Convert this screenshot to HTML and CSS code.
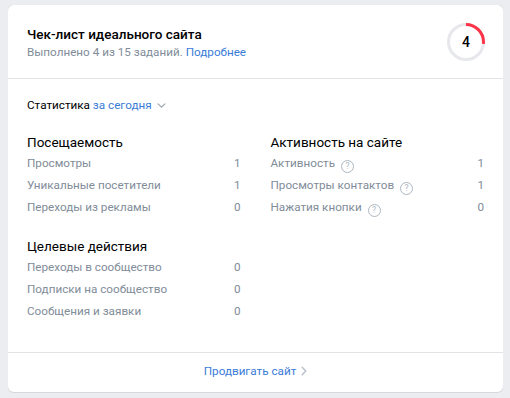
FILE: index.html
```html
<html>
<head>
<meta charset="utf-8">
<link rel="stylesheet" href="styles.css">
</head>
<body>
<div class="card">
	<div class="card_head">
		<div class="head_text">
			<div class="title">Чек-лист идеального сайта</div>
			<div class="subtitle">Выполнено 4 из 15 заданий. <a class="link" href="#">Подробнее</a></div>
		</div>
		<div class="progress">
			<svg width="40" height="40" viewBox="0 0 40 40">
				<circle cx="20" cy="20" r="17.5" fill="none" stroke="#e7e8ec" stroke-width="3"/>
				<circle cx="20" cy="20" r="17.5" fill="none" stroke="#ff3347" stroke-width="3"
					stroke-dasharray="29.3 200" transform="rotate(-90 20 20)"/>
			</svg>
			<span class="progress_num">4</span>
		</div>
	</div>

	<div class="card_body">
		<div class="period">Статистика <a class="link" href="#">за сегодня</a>
			<svg class="chev_down" width="9" height="5" viewBox="0 0 9 5"><path d="M1 .8l3.5 3.4L8 .8" fill="none" stroke="#99a2ad" stroke-width="1.1" stroke-linecap="round" stroke-linejoin="round"/></svg>
		</div>

		<div class="stats">
			<div class="col">
				<div class="group">
					<div class="group_title">Посещаемость</div>
					<div class="row"><span>Просмотры</span><span>1</span></div>
					<div class="row"><span>Уникальные посетители</span><span>1</span></div>
					<div class="row"><span>Переходы из рекламы</span><span>0</span></div>
				</div>
				<div class="group">
					<div class="group_title">Целевые действия</div>
					<div class="row"><span>Переходы в сообщество</span><span>0</span></div>
					<div class="row"><span>Подписки на сообщество</span><span>0</span></div>
					<div class="row"><span>Сообщения и заявки</span><span>0</span></div>
				</div>
			</div>
			<div class="col">
				<div class="group">
					<div class="group_title">Активность на сайте</div>
					<div class="row"><span>Активность <i class="hint">?</i></span><span>1</span></div>
					<div class="row"><span>Просмотры контактов <i class="hint">?</i></span><span>1</span></div>
					<div class="row"><span>Нажатия кнопки <i class="hint">?</i></span><span>0</span></div>
				</div>
			</div>
		</div>
	</div>

	<div class="card_foot">
		<a class="link" href="#">Продвигать сайт</a>
		<svg class="chev_right" width="6" height="10" viewBox="0 0 6 10"><path d="M1.2 1.2l3.6 3.8-3.6 3.8" fill="none" stroke="#b8c1cc" stroke-width="1.5" stroke-linecap="round" stroke-linejoin="round"/></svg>
	</div>
</div>
</body>
</html>
```

FILE: styles.css
```css
body {
	margin: 5px 7px 0 8px;
	background-color: #ebedf0;
	font-family: Roboto, "Noto Sans", sans-serif;
	font-size: 11.7px;
	color: #000;
}
.card {
	background-color: #fff;
	border-radius: 6px;
	box-shadow: 0 1px 0 0 #d7d8db, 0 0 0 1px #e3e4e8;
}
.link {
	color: #3a7cd8;
	text-decoration: none;
}
.card_head {
	display: flex;
	align-items: flex-start;
	justify-content: space-between;
	padding: 20px 17px 16px 19px;
	border-bottom: 1px solid #e1e3e6;
}
.title {
	font-size: 13.5px;
	line-height: 18px;
	font-weight: 500;
}
.subtitle {
	line-height: 16px;
	margin-top: 1px;
	color: #818c99;
}
.progress {
	position: relative;
	width: 40px;
	height: 40px;
	margin-top: -3px;
}
.progress svg {
	display: block;
}
.progress_num {
	position: absolute;
	left: 0;
	top: 0;
	width: 40px;
	line-height: 40px;
	text-align: center;
	font-size: 14px;
	font-weight: 500;
}
.card_body {
	padding: 18px 19px 30px 19px;
}
.period {
	line-height: 16px;
}
.chev_down {
	margin-left: 2px;
	vertical-align: 1px;
}
.stats {
	display: grid;
	grid-template-columns: 1fr 1fr;
	column-gap: 30px;
	margin-top: 19px;
}
.group + .group {
	margin-top: 18px;
}
.group_title {
	font-size: 13.5px;
	line-height: 20px;
}
.row {
	display: flex;
	justify-content: space-between;
	line-height: 22px;
	color: #818c99;
}
.hint {
	display: inline-block;
	width: 11px;
	height: 11px;
	margin-left: 3px;
	border: 1px solid #aeb7c2;
	border-radius: 50%;
	font-style: normal;
	font-size: 8.5px;
	line-height: 11px;
	text-align: center;
	color: #aeb7c2;
	vertical-align: -2px;
}
.card_foot {
	display: flex;
	align-items: center;
	justify-content: center;
	padding: 10px 0 13px 0;
	line-height: 16px;
	border-top: 1px solid #e1e3e6;
}
.chev_right {
	margin-left: 5px;
}
```
